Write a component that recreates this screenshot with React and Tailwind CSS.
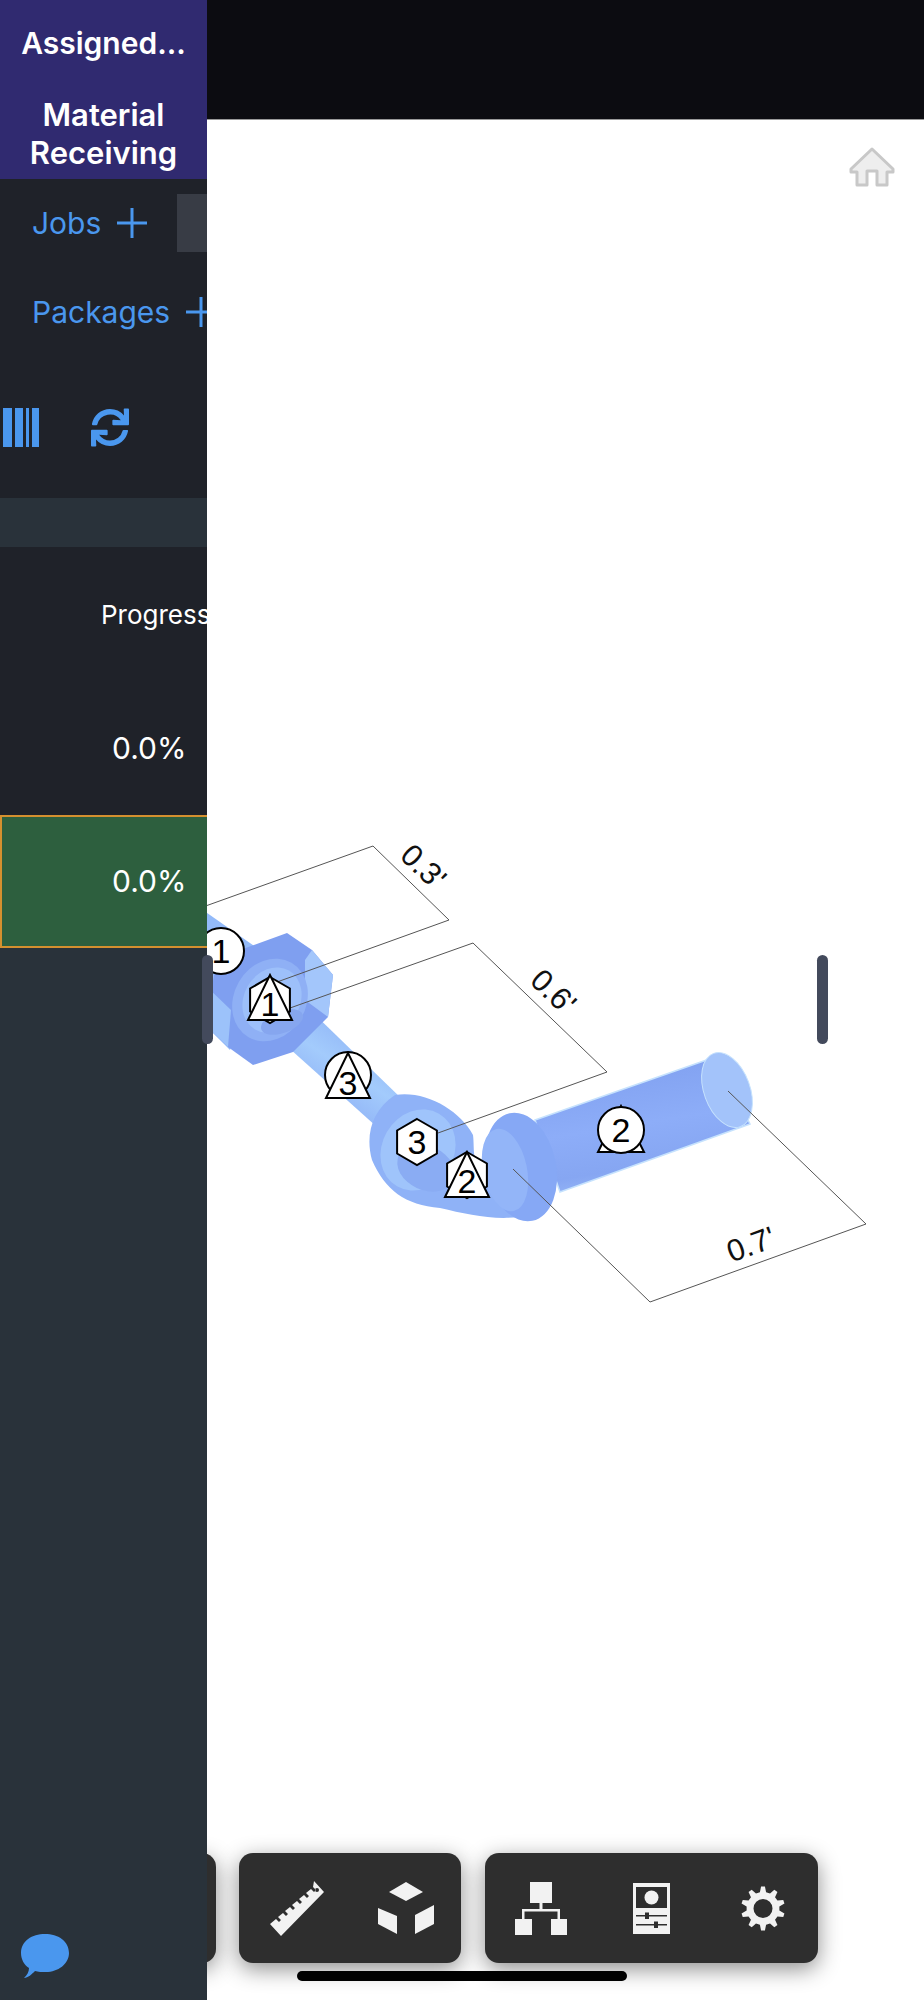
import { FaSync } from 'react-icons/fa';

const blue = '#4a97ee';

function gearPath(cx, cy, outer, inner, hole, teeth) {
    let d = '';
    const step = (Math.PI * 2) / teeth;
    for (let i = 0; i < teeth; i++) {
        const a = -Math.PI / 2 + i * step;
        const pts = [
            [inner, a - step * 0.3],
            [outer, a - step * 0.14],
            [outer, a + step * 0.14],
            [inner, a + step * 0.3],
        ];
        pts.forEach(([r, t], j) => {
            const x = (cx + r * Math.cos(t)).toFixed(2);
            const y = (cy + r * Math.sin(t)).toFixed(2);
            d += `${i === 0 && j === 0 ? 'M' : 'L'}${x} ${y} `;
        });
    }
    d += `Z M${cx - hole} ${cy} a${hole} ${hole} 0 1 0 ${hole * 2} 0 a${hole} ${hole} 0 1 0 ${-hole * 2} 0 Z`;
    return d;
}

function PlusIcon({ className }) {
    return (
        <svg viewBox="0 0 30 30" className={className} fill={blue}>
            <rect x="13.5" y="0" width="3" height="30" />
            <rect x="0" y="13.5" width="30" height="3" />
        </svg>
    );
}

function BarcodeIcon() {
    return (
        <svg viewBox="0 0 36 39" className="w-[36px] h-[39px]" fill={blue}>
            <rect x="0" y="0" width="9" height="39" />
            <rect x="12" y="0" width="8" height="39" />
            <rect x="23" y="0" width="3" height="39" />
            <rect x="29" y="0" width="7" height="39" />
        </svg>
    );
}

function ChatIcon() {
    return (
        <svg viewBox="0 0 48 44" className="w-[48px] h-[44px]" fill={blue}>
            <path d="M24 0C37 0 48 7 48 19C48 30 37 38 25 38C21 38 17 38 14 37C11 40 7 44 3 44C6 41 8 38 8 34C3 31 0 25 0 19C0 7 11 0 24 0Z" />
        </svg>
    );
}

function RulerIcon() {
    return (
        <svg viewBox="0 0 54 55" className="w-[54px] h-[55px] ml-[5px]" fill="#f2f2f2">
            <path
                fillRule="evenodd"
                d="M0 43L6 38L9 41L11 39L8 36L13 32L16 35L18 33L15 30L20 26L23 29L25 27L22 24L27 20L30 23L32 21L29 18L34 14L37 17L39 15L36 12L41 8L44 11L46 9L43 6L44 0L54 11L11 55Z M45 9a2 2 0 1 0 4 0a2 2 0 1 0 -4 0Z"
            />
        </svg>
    );
}

function CubeIcon() {
    return (
        <svg viewBox="0 0 56 52" className="w-[56px] h-[52px]" fill="#f2f2f2">
            <path d="M28 0L45 10L28 19L11 10Z" />
            <path d="M0 26L19 34V52L0 42Z" />
            <path d="M56 23V42L37 52V33Z" />
        </svg>
    );
}

function TreeIcon() {
    return (
        <svg viewBox="0 0 52 53" className="w-[52px] h-[53px]" fill="#f2f2f2">
            <rect x="15" y="0" width="22" height="21" />
            <rect x="0" y="37" width="17" height="16" />
            <rect x="36" y="37" width="16" height="16" />
            <rect x="24.5" y="21" width="3" height="7" />
            <rect x="7" y="27" width="38" height="2.5" />
            <rect x="7" y="27" width="2.5" height="10" />
            <rect x="42.5" y="27" width="2.5" height="10" />
        </svg>
    );
}

function PanelIcon() {
    return (
        <svg viewBox="0 0 37 51" className="w-[37px] h-[51px]">
            <rect width="37" height="51" fill="#f2f2f2" />
            <rect x="3" y="4" width="31" height="21" fill="#2e2e2e" />
            <circle cx="18.5" cy="14.5" r="7" fill="#f2f2f2" />
            <rect x="3" y="32" width="31" height="1.5" fill="#2e2e2e" />
            <rect x="12" y="29.5" width="4" height="6.5" fill="#2e2e2e" />
            <rect x="3" y="41" width="31" height="1.5" fill="#2e2e2e" />
            <rect x="21" y="38.5" width="4" height="6.5" fill="#2e2e2e" />
        </svg>
    );
}

function GearIcon() {
    return (
        <svg viewBox="0 0 44 45" className="w-[44px] h-[45px]" fill="#f2f2f2">
            <path fillRule="evenodd" d={gearPath(22, 22.5, 22, 16.5, 9.5, 10)} />
        </svg>
    );
}

function HomeIcon() {
    return (
        <svg viewBox="0 0 46 40" className="w-[46px] h-[40px]" fill="#eeeeee" stroke="#c8c8c8" strokeWidth="3" strokeLinejoin="round">
            <path d="M23 2L44 22V25H38V38H28V24H18V38H8V25H2V22Z" />
        </svg>
    );
}

function Marker({ x, y, shape, tri, apex, base, half, n, textY }) {
    const triangle = tri && (
        <polygon points={`${x},${apex} ${x - half},${base} ${x + half},${base}`} fill="#fff" stroke="#000" strokeWidth="2" />
    );
    const hex = [];
    for (let i = 0; i < 6; i++) {
        const a = -Math.PI / 2 + (i * Math.PI) / 3;
        hex.push(`${(x + 23 * Math.cos(a)).toFixed(1)},${(y + 23 * Math.sin(a)).toFixed(1)}`);
    }
    return (
        <g>
            {tri === 'back' && triangle}
            {shape === 'circle' && <circle cx={x} cy={y} r="23" fill="#fff" stroke="#000" strokeWidth="2" />}
            {shape === 'hex' && <polygon points={hex.join(' ')} fill="#fff" stroke="#000" strokeWidth="2" />}
            {tri === 'front' && triangle}
            <text x={x} y={textY} textAnchor="middle" fontSize="34" fontFamily="Liberation Sans, sans-serif" fill="#000">
                {n}
            </text>
        </g>
    );
}

function PipeDrawing() {
    const lineProps = { fill: 'none', stroke: '#555', strokeWidth: 1 };
    const dimText = { fontSize: 31, fontFamily: 'Liberation Sans, sans-serif', fill: '#111', textAnchor: 'middle' };
    return (
        <svg viewBox="0 0 924 2000" className="absolute inset-0 w-[924px] h-[2000px]">
            <defs>
                <linearGradient id="cyl" x1="0.35" y1="0" x2="0.6" y2="1">
                    <stop offset="0" stopColor="#7f9fef" />
                    <stop offset="0.5" stopColor="#8dadf8" />
                    <stop offset="0.8" stopColor="#86a6f2" />
                    <stop offset="1" stopColor="#9cbcf8" />
                </linearGradient>
                <linearGradient id="thin" x1="0.7" y1="0.2" x2="0.3" y2="0.8">
                    <stop offset="0" stopColor="#8fb4f6" />
                    <stop offset="0.5" stopColor="#a3cbfc" />
                    <stop offset="1" stopColor="#8fb2f6" />
                </linearGradient>
            </defs>

            {/* pipe coming in from under the sidebar */}
            <polygon points="200,908 260,950 230,1050 200,1020" fill="#93baf9" />

            {/* thin pipe, starts under the nut */}
            <polygon points="305,1005 403,1100 377,1127 280,1040" fill="url(#thin)" />

            {/* hex nut */}
            <polygon points="287,933 312,950 333,975 328,1017 293,1052 253,1065 228,1047 205,1025 215,970 240,950" fill="#7f9ff0" />
            <polygon points="312,950 333,975 328,1017 305,1000 305,960" fill="#a3c6fb" />
            <polygon points="205,985 231,1010 228,1047 205,1025" fill="#9cc2fa" />
            <ellipse cx="270" cy="1000" rx="36" ry="43" fill="#8fb0f5" transform="rotate(30 270 1000)" />
            <ellipse cx="272" cy="1000" rx="28" ry="34" fill="#9dc0fa" transform="rotate(30 272 1000)" />
            <ellipse cx="282" cy="1022" rx="22" ry="11" fill="#86a6ef" transform="rotate(-20 282 1022)" />

            {/* elbow */}
            <path d="M395 1095C425 1090 460 1110 473 1135C475 1150 470 1165 490 1185L530 1215C500 1222 470 1215 440 1208C405 1205 385 1190 372 1160C365 1135 372 1110 395 1095Z" fill="#8fb2f7" />
            <ellipse cx="418" cy="1150" rx="36" ry="42" fill="#9fc4fb" transform="rotate(30 418 1150)" />
            <ellipse cx="426" cy="1168" rx="30" ry="22" fill="#8aacf3" transform="rotate(25 426 1168)" />

            {/* big cylinder */}
            <polygon points="535,1120 718,1056 750,1124 560,1192" fill="url(#cyl)" stroke="#c6e2fd" strokeWidth="1.5" />
            <ellipse cx="727" cy="1090" rx="23" ry="39" fill="#a3c3fa" stroke="#c6e2fd" strokeWidth="1" transform="rotate(-20 727 1090)" />

            {/* flange */}
            <ellipse cx="521" cy="1167" rx="35" ry="55" fill="#86a8f5" transform="rotate(-12 521 1167)" />
            <ellipse cx="505" cy="1170" rx="22" ry="42" fill="#93b5f8" transform="rotate(-12 505 1170)" />

            {/* dimensions */}
            <polyline points="200,908 373,846 449,920 277,982" {...lineProps} />
            <polyline points="290,1008 473,943 607,1072 438,1133" {...lineProps} />
            <polyline points="513,1169 650,1302 866,1224 728,1091" {...lineProps} />
            <text x="423" y="877" transform="rotate(44 423 867)" {...dimText}>0.3'</text>
            <text x="553" y="1002" transform="rotate(44 553 992)" {...dimText}>0.6'</text>
            <text x="751" y="1255" transform="rotate(-20 751 1245)" {...dimText}>0.7'</text>

            {/* callouts */}
            <Marker x={221} y={951} shape="circle" n="1" textY={963} />
            <Marker x={270} y={1000} shape="hex" tri="front" apex={975} base={1020} half={22} n="1" textY={1016} />
            <Marker x={348} y={1075} shape="circle" tri="front" apex={1053} base={1098} half={22} n="3" textY={1095} />
            <Marker x={417} y={1142} shape="hex" n="3" textY={1154} />
            <Marker x={467} y={1175} shape="hex" tri="front" apex={1152} base={1197} half={22} n="2" textY={1193} />
            <Marker x={621} y={1130} shape="circle" tri="back" apex={1106} base={1152} half={23} n="2" textY={1142} />
        </svg>
    );
}

function ToolButton({ children }) {
    return <div className="w-[111px] h-full flex items-center justify-center">{children}</div>;
}

function Toolbar({ className, children }) {
    return (
        <div className={`h-[110px] bg-[#2e2e2e] rounded-[14px] shadow-[0_6px_22px_rgba(0,0,0,0.45)] flex items-center ${className}`}>
            {children}
        </div>
    );
}

export default function App() {
    return (
        <div className="relative w-[924px] h-[2000px] flex overflow-hidden bg-white font-['Inter',sans-serif]">
            <PipeDrawing />

            <aside className="relative z-10 w-[207px] h-full flex flex-col bg-[#29323a] overflow-hidden whitespace-nowrap">
                <div className="h-[179px] bg-[#302a70] text-white font-semibold text-[30px] flex flex-col items-center">
                    <div className="h-[86px] flex items-center">Assigned...</div>
                    <div className="text-center text-[31px] leading-[38px] mt-[10px]">
                        Material
                        <br />
                        Receiving
                    </div>
                </div>

                <div className="bg-[#1f2229]">
                    <div className="h-[88px] flex items-center text-[#4a97ee] text-[30px] pl-[32px] relative">
                        <span>Jobs</span>
                        <PlusIcon className="w-[30px] h-[30px] ml-[16px]" />
                        <div className="absolute right-0 top-[15px] w-[30px] h-[58px] bg-[#383c45]" />
                    </div>
                    <div className="h-[90px] flex items-center text-[#4a97ee] text-[30px] pl-[32px]">
                        <span>Packages</span>
                        <PlusIcon className="w-[30px] h-[30px] ml-[16px] shrink-0" />
                    </div>
                    <div className="h-[141px] flex items-start pt-[51px] pl-[3px]">
                        <BarcodeIcon />
                        <FaSync className="ml-[52px] text-[#4a97ee] w-[38px] h-[39px]" />
                    </div>
                    <div className="h-[49px] bg-[#29323a]" />
                    <div className="h-[135px] flex items-center pl-[101px] text-white text-[26px]">Progress</div>
                    <div className="h-[133px] flex items-center pl-[112px] text-white text-[30px]">0.0%</div>
                    <div className="h-[133px] flex items-center pl-[110px] text-white text-[30px] bg-[#2d5f3e] border-2 border-r-0 border-[#d4902f]">0.0%</div>
                </div>

                <div className="mt-auto ml-[21px] mb-[22px]">
                    <ChatIcon />
                </div>
            </aside>

            <main className="flex-1 flex flex-col">
                <div className="relative h-[120px] bg-[#0c0c11] border-b border-[#999]" />
                <div className="relative flex justify-end pt-[27px] pr-[29px]">
                    <HomeIcon />
                </div>
            </main>

            {/* handles on the viewer */}
            <div className="absolute z-20 left-[202px] top-[955px] w-[11px] h-[89px] rounded-[6px] bg-[#434a5c]" />
            <div className="absolute z-20 left-[817px] top-[955px] w-[11px] h-[89px] rounded-[6px] bg-[#434a5c]" />

            {/* bottom toolbars */}
            <div className="absolute left-[116px] top-[1853px] flex gap-[24px]">
                <Toolbar className="w-[100px]" />
                <Toolbar className="w-[222px] -ml-[1px]">
                    <ToolButton><RulerIcon /></ToolButton>
                    <ToolButton><CubeIcon /></ToolButton>
                </Toolbar>
                <Toolbar className="w-[333px]">
                    <ToolButton><TreeIcon /></ToolButton>
                    <ToolButton><PanelIcon /></ToolButton>
                    <ToolButton><GearIcon /></ToolButton>
                </Toolbar>
            </div>

            {/* home indicator */}
            <div className="absolute left-[297px] top-[1971px] w-[330px] h-[10px] rounded-full bg-black" />
        </div>
    );
}
